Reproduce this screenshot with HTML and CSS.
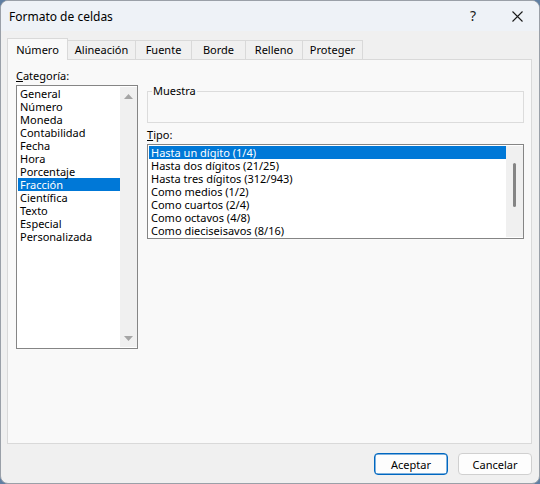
FILE: index.html
```html
<!DOCTYPE html>
<html lang="es">
<head>
<meta charset="utf-8">
<title>Formato de celdas</title>
<link rel="stylesheet" href="styles.css">
</head>
<body>
<div class="window">
  <div class="titlebar">
    <span class="title">Formato de celdas</span>
    <span class="help">?</span>
    <svg class="close" width="11" height="11" viewBox="0 0 11 11"><path d="M0.5 0.5 L10.5 10.5 M10.5 0.5 L0.5 10.5" stroke="#1a1a1a" stroke-width="1.1" fill="none"/></svg>
  </div>
  <div class="body">
    <div class="tabs">
      <div class="tab active tab-num">Número</div>
      <div class="tab tab-ali">Alineación</div>
      <div class="tab tab-fue">Fuente</div>
      <div class="tab tab-bor">Borde</div>
      <div class="tab tab-rel">Relleno</div>
      <div class="tab tab-pro">Proteger</div>
    </div>
    <div class="panel">
      <div class="col-left">
        <div class="label"><span class="ul">C</span>ategoría:</div>
        <div class="listbox cat">
          <ul class="items">
            <li>General</li>
            <li>Número</li>
            <li>Moneda</li>
            <li>Contabilidad</li>
            <li>Fecha</li>
            <li>Hora</li>
            <li>Porcentaje</li>
            <li class="sel">Fracción</li>
            <li>Científica</li>
            <li>Texto</li>
            <li>Especial</li>
            <li>Personalizada</li>
          </ul>
          <div class="vscroll arrows">
            <svg width="9" height="5" viewBox="0 0 9 5"><path d="M4.5 0 L9 5 L0 5 Z" fill="#a5a5a5"/></svg>
            <svg width="9" height="5" viewBox="0 0 9 5"><path d="M0 0 L9 0 L4.5 5 Z" fill="#a5a5a5"/></svg>
          </div>
        </div>
      </div>
      <div class="col-right">
        <fieldset class="group">
          <legend>Muestra</legend>
        </fieldset>
        <div class="label"><span class="ul">T</span>ipo:</div>
        <div class="listbox tipo">
          <ul class="items">
            <li class="sel">Hasta un dígito (1/4)</li>
            <li>Hasta dos dígitos (21/25)</li>
            <li>Hasta tres dígitos (312/943)</li>
            <li>Como medios (1/2)</li>
            <li>Como cuartos (2/4)</li>
            <li>Como octavos (4/8)</li>
            <li>Como dieciseisavos (8/16)</li>
          </ul>
          <div class="vscroll">
            <div class="thumb"></div>
          </div>
        </div>
      </div>
    </div>
    <div class="buttons">
      <button class="btn primary">Aceptar</button>
      <button class="btn">Cancelar</button>
    </div>
  </div>
</div>
</body>
</html>
```

FILE: styles.css
```css
* { box-sizing: border-box; }
html, body { margin: 0; padding: 0; }
body {
  width: 540px;
  height: 484px;
  overflow: hidden;
  background: #5f7fa3;
  font-family: "Noto Sans", "Segoe UI", sans-serif;
  font-size: 11px;
  color: #000;
}
.window {
  width: 540px;
  height: 484px;
  border: 1px solid #9aa0a8;
  border-radius: 8px;
  background: #f0f0f0;
  overflow: hidden;
  display: flex;
  flex-direction: column;
}
.titlebar {
  flex: none;
  height: 30px;
  background: #eef2f7;
  display: flex;
  align-items: center;
  padding-left: 8px;
}
.title { flex: 1; font-size: 12px; }
.help { font-size: 14px; width: 6px; margin-right: 36px; line-height: 14px; color: #1a1a1a; }
.close { margin-right: 16px; display: block; }

.body {
  flex: 1;
  display: flex;
  flex-direction: column;
  padding: 7px 7px 8px 6px;
}
.tabs {
  display: flex;
  align-items: flex-end;
  height: 21px;
  position: relative;
  z-index: 1;
}
.tab {
  height: 19px;
  border: 1px solid #d9d9d9;
  border-bottom: none;
  margin-left: -1px;
  background: #f0f0f0;
  text-align: center;
  line-height: 17px;
}
.tab.active {
  height: 22px;
  margin-bottom: -1px;
  margin-left: 0;
  background: #f9f9f9;
  line-height: 21px;
}
.tab-num { width: 61px; }
.tab-ali { width: 69px; }
.tab-fue { width: 57px; }
.tab-bor { width: 55px; }
.tab-rel { width: 58px; }
.tab-pro { width: 61px; }

.panel {
  height: 385px;
  border: 1px solid #d9d9d9;
  background: #f9f9f9;
  padding: 8px 7px 0 8px;
  display: flex;
  gap: 9px;
}
.col-left { width: 122px; flex: none; }
.col-right { width: 377px; flex: none; }
.label { height: 15px; line-height: 15px; margin-bottom: 2px; }
.ul { text-decoration: underline; }

.listbox {
  border: 1px solid #858585;
  background: #fff;
  display: flex;
  padding: 1px 0 1px 1px;
}
.listbox.cat { height: 264px; }
.listbox.tipo { height: 95px; }
.items {
  list-style: none;
  margin: 0;
  padding: 0;
  flex: 1;
}
.items li {
  height: 13px;
  line-height: 13px;
  padding-left: 2px;
  white-space: nowrap;
}
.items li.sel { background: #0078d7; color: #fff; }
.vscroll {
  width: 17px;
  flex: none;
  background: #f0f0f0;
}
.vscroll.arrows {
  display: flex;
  flex-direction: column;
  justify-content: space-between;
  align-items: center;
  padding: 7px 0 6px;
}
.vscroll svg { display: block; }
.thumb {
  width: 3px;
  height: 44px;
  margin: 17px auto 0;
  background: #858585;
  border-radius: 2px;
}

.group {
  margin: 16px 0 0 0;
  padding: 0 4px;
  height: 39px;
  border: 1px solid #dcdcdc;
  min-width: 0;
}
.group legend {
  padding: 0 1px;
  line-height: 14px;
}
.col-right .label { margin-top: 4px; }

.buttons {
  display: flex;
  justify-content: flex-end;
  gap: 10px;
  margin-top: 9px;
}
.btn {
  width: 74px;
  height: 22px;
  font-family: inherit;
  font-size: 11px;
  color: #000;
  background: #fdfdfd;
  border: 1px solid #d0d0d0;
  border-radius: 4px;
  padding: 0;
}
.btn.primary {
  border-color: #0067c0;
  box-shadow: inset 0 0 0 0.5px #0067c0;
}
```
